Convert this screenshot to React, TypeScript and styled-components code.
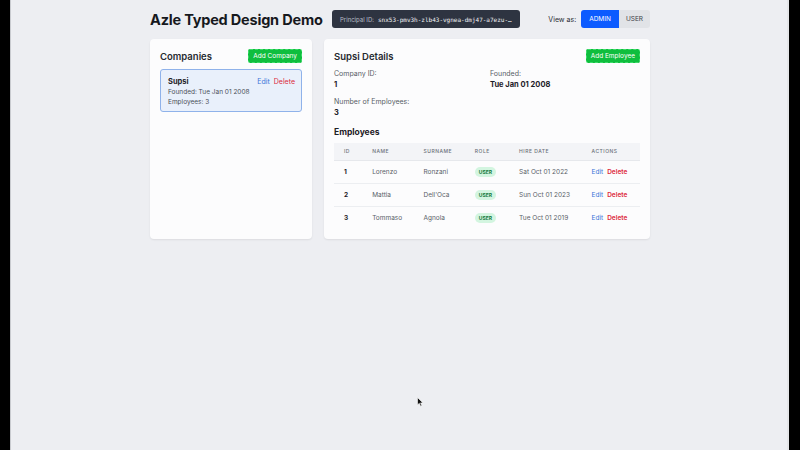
import React from "react";
import styled, { createGlobalStyle } from "styled-components";

const Global = createGlobalStyle`
  html, body { margin: 0; padding: 0; background: #000; }
  body { font-family: Inter, "Noto Sans", sans-serif; }
  * { box-sizing: border-box; }
`;

const Screen = styled.div`
  position: relative;
  margin: 0 11px 0 10px;
  height: 450px;
  background: #edeef2;
  border-left: 1px solid #c9cbd0;
  border-right: 2px solid #e4e5e8;
  overflow: hidden;
`;

const Container = styled.div`
  width: 500px;
  margin: 0 auto;
  padding-top: 10px;
  transform: translateX(1px);
`;

const Header = styled.header`
  display: flex;
  align-items: center;
  gap: 12px;
  height: 18px;
  margin-bottom: 11px;
`;

const Title = styled.h1`
  margin: 0;
  font-size: 14.5px;
  letter-spacing: -0.2px;
  font-weight: 700;
  color: #16181d;
  width: 170px;
  flex-shrink: 0;
  white-space: nowrap;
`;

const Principal = styled.div`
  display: flex;
  align-items: center;
  gap: 4px;
  width: 188px;
  height: 18px;
  padding: 0 8px;
  background: #2e3441;
  border-radius: 3px;
  white-space: nowrap;
  overflow: hidden;
`;

const PrincipalLabel = styled.span`
  font-size: 6px;
  color: #b8bcc6;
`;

const PrincipalValue = styled.span`
  font-family: "DejaVu Sans Mono", "Liberation Mono", monospace;
  font-size: 6px;
  color: #f2f3f5;
`;

const ViewAs = styled.div`
  margin-left: auto;
  display: flex;
  align-items: center;
  gap: 5px;
  font-size: 7px;
  color: #2a2d33;
`;

const Toggle = styled.div`
  display: flex;
  border-radius: 3px;
  overflow: hidden;
`;

const ToggleBtn = styled.button<{ $active?: boolean }>`
  border: none;
  height: 18px;
  padding: 0 ${(p) => (p.$active ? "8px" : "7px")};
  font-family: inherit;
  font-size: 6.5px;
  background: ${(p) => (p.$active ? "#0d5bff" : "#e1e3e7")};
  color: ${(p) => (p.$active ? "#fff" : "#3c4048")};
`;

const Grid = styled.div`
  display: grid;
  grid-template-columns: 162px 1fr;
  gap: 12px;
`;

const Card = styled.section`
  background: #fcfcfd;
  border-radius: 4px;
  box-shadow: 0 1px 2px rgba(0, 0, 0, 0.08);
  padding: 10px;
  height: 200px;
`;

const CardHead = styled.div`
  display: flex;
  align-items: center;
  justify-content: space-between;
  height: 14px;
  margin-bottom: 6px;
`;

const CardTitle = styled.h2`
  margin: 0;
  font-size: 9.5px;
  font-weight: 600;
  color: #26292f;
`;

const GreenBtn = styled.button`
  border: 1px dashed #3ddc6a;
  background: #0fbe3e;
  color: #fff;
  font-family: inherit;
  font-size: 6.5px;
  height: 14px;
  padding: 0 4px;
  border-radius: 2px;
`;

const CompanyItem = styled.div`
  border: 1px solid #8fb2ea;
  background: #e9f0fb;
  border-radius: 3px;
  padding: 7px 6px 6px 7px;
  height: 43px;
  display: flex;
  justify-content: space-between;
`;

const CompanyInfo = styled.div`
  display: flex;
  flex-direction: column;
  gap: 2px;
`;

const CompanyName = styled.div`
  font-size: 7.5px;
  font-weight: 700;
  color: #1d2026;
`;

const Small = styled.div`
  font-size: 6.5px;
  color: #4a4f58;
`;

const Actions = styled.div<{ $size: number }>`
  display: flex;
  gap: 4px;
  font-size: ${(p) => p.$size}px;
  line-height: 10px;
`;

const LinkBtn = styled.span<{ $danger?: boolean; $bold?: boolean }>`
  color: ${(p) => (p.$danger ? "#dc2a3c" : "#3b74d8")};
  font-weight: ${(p) => (p.$bold ? 600 : 400)};
`;

const InfoGrid = styled.div`
  display: grid;
  grid-template-columns: 156px 1fr;
  row-gap: 8px;
  margin-top: 2px;
`;

const Field = styled.div`
  display: flex;
  flex-direction: column;
  gap: 2px;
`;

const FieldLabel = styled.div`
  font-size: 7px;
  color: #585d66;
`;

const FieldValue = styled.div`
  font-size: 7.5px;
  font-weight: 700;
  color: #1d2026;
`;

const SubTitle = styled.h3`
  margin: 10px 0 6px;
  font-size: 8.5px;
  font-weight: 700;
  color: #1d2026;
`;

const Table = styled.table`
  width: 100%;
  border-collapse: collapse;
  table-layout: fixed;
`;

const Th = styled.th<{ $w: number }>`
  width: ${(p) => p.$w}px;
  text-align: left;
  padding: 0 0 0 10px;
  height: 17px;
  background: #f3f4f7;
  font-size: 5px;
  font-weight: 500;
  letter-spacing: 0.5px;
  color: #6b7079;
  text-transform: uppercase;
  border-bottom: 1px solid #e6e8ec;
`;

const Td = styled.td<{ $bold?: boolean }>`
  padding: 0 0 0 10px;
  height: 23px;
  font-size: 6.5px;
  color: ${(p) => (p.$bold ? "#1d2026" : "#5a5f68")};
  font-weight: ${(p) => (p.$bold ? 700 : 400)};
  white-space: nowrap;
`;

const Tr = styled.tr`
  & + & td { border-top: 1px solid #eceef1; }
`;

const Badge = styled.span`
  display: inline-block;
  background: #d3f5e0;
  color: #157a3c;
  font-size: 5px;
  font-weight: 700;
  padding: 2px 4px;
  border-radius: 6px;
`;

const Cursor = styled.svg`
  position: absolute;
  left: 406px;
  top: 397px;
`;

const employees = [
  { id: 1, name: "Lorenzo", surname: "Ronzani", date: "Sat Oct 01 2022" },
  { id: 2, name: "Mattia", surname: "Dell'Oca", date: "Sun Oct 01 2023" },
  { id: 3, name: "Tommaso", surname: "Agnola", date: "Tue Oct 01 2019" },
];

export default function App() {
  return (
    <>
      <Global />
      <Screen>
        <Container>
          <Header>
            <Title>Azle Typed Design Demo</Title>
            <Principal>
              <PrincipalLabel>Principal ID:</PrincipalLabel>
              <PrincipalValue>snx53-pmv3h-zlb43-vgnea-dmj47-a7ezu-…</PrincipalValue>
            </Principal>
            <ViewAs>
              View as:
              <Toggle>
                <ToggleBtn $active>ADMIN</ToggleBtn>
                <ToggleBtn>USER</ToggleBtn>
              </Toggle>
            </ViewAs>
          </Header>
          <Grid>
            <Card>
              <CardHead>
                <CardTitle>Companies</CardTitle>
                <GreenBtn>Add Company</GreenBtn>
              </CardHead>
              <CompanyItem>
                <CompanyInfo>
                  <CompanyName>Supsi</CompanyName>
                  <Small>Founded: Tue Jan 01 2008</Small>
                  <Small>Employees: 3</Small>
                </CompanyInfo>
                <Actions $size={7}>
                  <LinkBtn>Edit</LinkBtn>
                  <LinkBtn $danger>Delete</LinkBtn>
                </Actions>
              </CompanyItem>
            </Card>
            <Card>
              <CardHead>
                <CardTitle>Supsi Details</CardTitle>
                <GreenBtn>Add Employee</GreenBtn>
              </CardHead>
              <InfoGrid>
                <Field>
                  <FieldLabel>Company ID:</FieldLabel>
                  <FieldValue>1</FieldValue>
                </Field>
                <Field>
                  <FieldLabel>Founded:</FieldLabel>
                  <FieldValue>Tue Jan 01 2008</FieldValue>
                </Field>
                <Field>
                  <FieldLabel>Number of Employees:</FieldLabel>
                  <FieldValue>3</FieldValue>
                </Field>
              </InfoGrid>
              <SubTitle>Employees</SubTitle>
              <Table>
                <thead>
                  <tr>
                    <Th $w={28}>ID</Th>
                    <Th $w={51}>Name</Th>
                    <Th $w={51}>Surname</Th>
                    <Th $w={44}>Role</Th>
                    <Th $w={72}>Hire Date</Th>
                    <Th $w={58}>Actions</Th>
                  </tr>
                </thead>
                <tbody>
                  {employees.map((e) => (
                    <Tr key={e.id}>
                      <Td $bold>{e.id}</Td>
                      <Td>{e.name}</Td>
                      <Td>{e.surname}</Td>
                      <Td>
                        <Badge>USER</Badge>
                      </Td>
                      <Td>{e.date}</Td>
                      <Td>
                        <Actions $size={6.5}>
                          <LinkBtn>Edit</LinkBtn>
                          <LinkBtn $danger $bold>Delete</LinkBtn>
                        </Actions>
                      </Td>
                    </Tr>
                  ))}
                </tbody>
              </Table>
            </Card>
          </Grid>
        </Container>
        <Cursor width="7" height="10" viewBox="0 0 7 10">
          <path d="M0.5 0.5 L0.5 8 L2.3 6.3 L3.6 9.3 L4.8 8.8 L3.6 5.9 L6 5.9 Z" fill="#111" stroke="#fff" strokeWidth="0.6" />
        </Cursor>
      </Screen>
    </>
  );
}
